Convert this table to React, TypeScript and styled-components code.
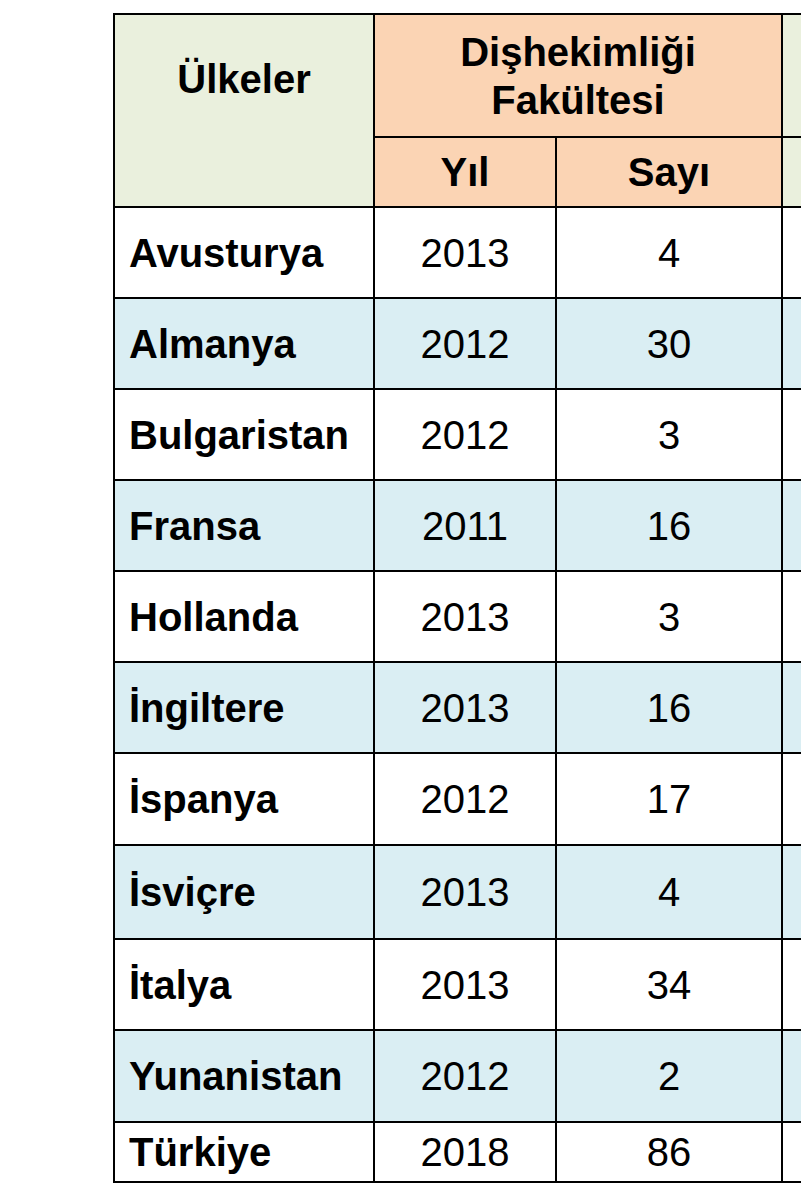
import React from 'react';
import styled, { createGlobalStyle } from 'styled-components';

const GlobalStyle = createGlobalStyle`
  html, body {
    margin: 0;
    padding: 0;
    background: #ffffff;
    overflow: hidden;
  }
  body {
    font-family: 'Liberation Sans', Arial, sans-serif;
    color: #000;
  }
`;

const GREEN = '#eaf0dd';
const ORANGE = '#fbd4b4';
const BLUE = '#daeef3';

// the table is wider than the window, the right part is cut off
const Page = styled.div`
  box-sizing: border-box;
  width: 100%;
  height: 1200px;
  padding: 13px 0 0 113px;
  overflow: hidden;
`;

const Table = styled.table`
  border-collapse: separate;
  border-spacing: 0;
  table-layout: fixed;
  width: 1078px;
  border-top: 2px solid #000;
  border-left: 2px solid #000;
`;

const Col = styled.col<{ $w: number }>`
  width: ${(p) => p.$w}px;
`;

const HeadRow = styled.tr<{ $h: number }>`
  height: ${(p) => p.$h}px;
`;

const HeadCell = styled.th<{ $bg: string; $top?: boolean }>`
  box-sizing: border-box;
  padding: ${(p) => (p.$top ? '40px 0 0' : '0')};
  background: ${(p) => p.$bg};
  border-right: 2px solid #000;
  border-bottom: 2px solid #000;
  font-size: 40px;
  font-weight: 700;
  line-height: 48px;
  text-align: center;
  vertical-align: ${(p) => (p.$top ? 'top' : 'middle')};
`;

const Row = styled.tr<{ $h: number; $shade: boolean }>`
  height: ${(p) => p.$h}px;
  background: ${(p) => (p.$shade ? BLUE : '#ffffff')};
`;

const Cell = styled.td<{ $name?: boolean }>`
  box-sizing: border-box;
  padding: ${(p) => (p.$name ? '0 0 0 14px' : '0')};
  border-right: 2px solid #000;
  border-bottom: 2px solid #000;
  font-size: 40px;
  font-weight: ${(p) => (p.$name ? 700 : 400)};
  line-height: 44px;
  text-align: ${(p) => (p.$name ? 'left' : 'center')};
  vertical-align: middle;
  white-space: nowrap;
`;

const rows = [
  { country: 'Avusturya', year: '2013', count: '4', h: 91 },
  { country: 'Almanya', year: '2012', count: '30', h: 91 },
  { country: 'Bulgaristan', year: '2012', count: '3', h: 91 },
  { country: 'Fransa', year: '2011', count: '16', h: 91 },
  { country: 'Hollanda', year: '2013', count: '3', h: 91 },
  { country: 'İngiltere', year: '2013', count: '16', h: 91 },
  { country: 'İspanya', year: '2012', count: '17', h: 92 },
  { country: 'İsviçre', year: '2013', count: '4', h: 94 },
  { country: 'İtalya', year: '2013', count: '34', h: 91 },
  { country: 'Yunanistan', year: '2012', count: '2', h: 92 },
  { country: 'Türkiye', year: '2018', count: '86', h: 60 },
];

export default function App() {
  return (
    <Page>
      <GlobalStyle />
      <Table>
        <colgroup>
          <Col $w={260} />
          <Col $w={182} />
          <Col $w={226} />
          <Col $w={182} />
          <Col $w={226} />
        </colgroup>
        <thead>
          <HeadRow $h={123}>
            <HeadCell $bg={GREEN} $top rowSpan={2}>
              Ülkeler
            </HeadCell>
            <HeadCell $bg={ORANGE} colSpan={2}>
              Dişhekimliği
              <br />
              Fakültesi
            </HeadCell>
            <HeadCell $bg={GREEN} colSpan={2} />
          </HeadRow>
          <HeadRow $h={70}>
            <HeadCell $bg={ORANGE}>Yıl</HeadCell>
            <HeadCell $bg={ORANGE}>Sayı</HeadCell>
            <HeadCell $bg={GREEN} />
            <HeadCell $bg={GREEN} />
          </HeadRow>
        </thead>
        <tbody>
          {rows.map(({ country, year, count, h }, i) => (
            <Row key={country} $h={h} $shade={i % 2 === 1}>
              <Cell $name>{country}</Cell>
              <Cell>{year}</Cell>
              <Cell>{count}</Cell>
              <Cell />
              <Cell />
            </Row>
          ))}
        </tbody>
      </Table>
    </Page>
  );
}
